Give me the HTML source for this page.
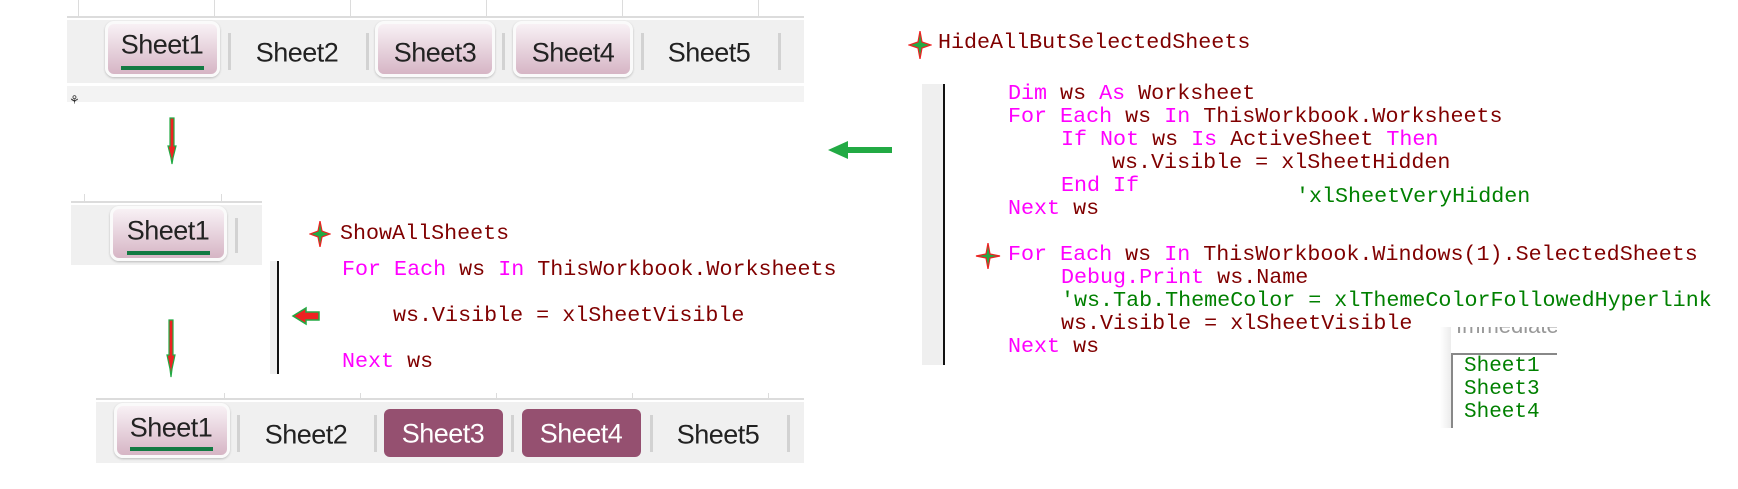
<!DOCTYPE html>
<html><head><meta charset="utf-8"><style>
body{margin:0;width:1738px;height:489px;background:#fff;position:relative;overflow:hidden;font-family:"Liberation Sans",sans-serif}
.a{position:absolute}
.bar{position:absolute;background:#f0f0f0}
.hl{position:absolute;height:2px;background:#dcdcdc}
.vl{position:absolute;width:1px;background:#dcdcdc}
.sep{position:absolute;width:3px;background:#d2d2d2}
.tab{position:absolute;box-sizing:border-box;border-radius:9px;font-size:26px;color:#222;text-align:center}
.sel{background:linear-gradient(#f8f1f5,#d6b5c5);border:3px solid #fafafa;box-shadow:0 1px 2px #bbb}
.pur{background:#955070;color:#fff;border-radius:6px}
.ul{position:absolute;height:4px;background:#137a43}
.t{position:absolute;font-size:27px;color:#222;transform:translate(-50%,-50%);white-space:nowrap;letter-spacing:-0.5px}
.c{position:absolute;font-family:"Liberation Mono",monospace;font-size:21.7px;line-height:24px;white-space:pre;color:#800000}
.k{color:#ff00ff}.g{color:#008000}
</style></head><body>
<!-- top tab bar -->
<div class="vl" style="left:78px;top:0;height:17px"></div>
<div class="vl" style="left:214px;top:0;height:17px"></div>
<div class="vl" style="left:350px;top:0;height:17px"></div>
<div class="vl" style="left:486px;top:0;height:17px"></div>
<div class="vl" style="left:622px;top:0;height:17px"></div>
<div class="vl" style="left:758px;top:0;height:17px"></div>
<div class="hl" style="left:67px;top:16px;width:737px"></div>
<div class="bar" style="left:67px;top:20px;width:737px;height:63px"></div>
<div class="a" style="left:67px;top:86px;width:737px;height:16px;background:#f3f3f3"></div>
<div class="a" style="left:69px;top:93px;font-size:12px;color:#333">&#x2698;</div>
<div class="tab sel" style="left:105px;top:21px;width:115px;height:56px"></div>
<div class="t" style="left:162px;top:45px">Sheet1</div>
<div class="ul" style="left:121px;top:66px;width:83px"></div>
<div class="sep" style="left:228px;top:33px;height:37px"></div>
<div class="t" style="left:297px;top:53px">Sheet2</div>
<div class="sep" style="left:366px;top:33px;height:37px"></div>
<div class="tab sel" style="left:375px;top:21px;width:120px;height:56px"></div>
<div class="t" style="left:435px;top:53px">Sheet3</div>
<div class="sep" style="left:502px;top:33px;height:37px"></div>
<div class="tab sel" style="left:513px;top:21px;width:120px;height:56px"></div>
<div class="t" style="left:573px;top:53px">Sheet4</div>
<div class="sep" style="left:641px;top:33px;height:37px"></div>
<div class="t" style="left:709px;top:53px">Sheet5</div>
<div class="sep" style="left:778px;top:33px;height:37px"></div>

<!-- down arrows -->
<svg class="a" style="left:162px;top:116px" width="20" height="50"><path d="M8 2h4v28h2l-3 12-1 6-1-6-3-12h2z" fill="#ee2222" stroke="#22aa44" stroke-width="1.2"/></svg>
<svg class="a" style="left:161px;top:318px" width="20" height="62"><path d="M8 2h4v35h2l-3 14-1 8-1-8-3-14h2z" fill="#ee2222" stroke="#22aa44" stroke-width="1.2"/></svg>

<!-- middle tab -->
<div class="vl" style="left:84px;top:194px;height:8px"></div>
<div class="vl" style="left:221px;top:194px;height:8px"></div>
<div class="hl" style="left:71px;top:201px;width:191px"></div>
<div class="bar" style="left:71px;top:205px;width:191px;height:60px"></div>
<div class="tab sel" style="left:110px;top:206px;width:117px;height:55px"></div>
<div class="t" style="left:168px;top:231px">Sheet1</div>
<div class="ul" style="left:127px;top:251px;width:83px"></div>
<div class="sep" style="left:235px;top:218px;height:35px"></div>

<!-- left code -->
<svg class="a" style="left:309px;top:221px" width="22" height="26"><path d="M11 0L13 10 21 13 13 16 11 26 9 16 1 13 9 10z" fill="#22aa44" stroke="#ee2222" stroke-width="1.2"/></svg>
<div class="c" style="left:340px;top:222px">ShowAllSheets</div>
<div class="a" style="left:270px;top:261px;width:7px;height:113px;background:#efefef"></div>
<div class="a" style="left:277px;top:261px;width:2px;height:113px;background:#111"></div>
<div class="c" style="left:342px;top:258px"><span class="k">For Each</span> ws <span class="k">In</span> ThisWorkbook.Worksheets</div>
<div class="c" style="left:393px;top:304px">ws.Visible = xlSheetVisible</div>
<div class="c" style="left:342px;top:350px"><span class="k">Next</span> ws</div>
<svg class="a" style="left:290px;top:306px" width="42" height="20"><path d="M3 10L16 2v4h13v8H16v4z" fill="#ee2222" stroke="#22aa44" stroke-width="1.5"/></svg>

<!-- bottom tab bar -->
<div class="vl" style="left:224px;top:393px;height:5px"></div>
<div class="vl" style="left:360px;top:393px;height:5px"></div>
<div class="vl" style="left:496px;top:393px;height:5px"></div>
<div class="vl" style="left:632px;top:393px;height:5px"></div>
<div class="vl" style="left:768px;top:393px;height:5px"></div>
<div class="hl" style="left:96px;top:398px;width:708px"></div>
<div class="bar" style="left:96px;top:402px;width:708px;height:61px"></div>
<div class="tab sel" style="left:114px;top:403px;width:116px;height:55px"></div>
<div class="t" style="left:171px;top:428px">Sheet1</div>
<div class="ul" style="left:130px;top:447px;width:83px"></div>
<div class="sep" style="left:237px;top:415px;height:37px"></div>
<div class="t" style="left:306px;top:435px">Sheet2</div>
<div class="sep" style="left:374px;top:415px;height:37px"></div>
<div class="tab pur" style="left:384px;top:409px;width:119px;height:48px"></div>
<div class="t" style="left:443px;top:434px;color:#fff">Sheet3</div>
<div class="sep" style="left:511px;top:415px;height:37px"></div>
<div class="tab pur" style="left:522px;top:409px;width:119px;height:48px"></div>
<div class="t" style="left:581px;top:434px;color:#fff">Sheet4</div>
<div class="sep" style="left:650px;top:415px;height:37px"></div>
<div class="t" style="left:718px;top:435px">Sheet5</div>
<div class="sep" style="left:787px;top:415px;height:37px"></div>

<!-- green arrow -->
<svg class="a" style="left:826px;top:139px" width="66" height="22"><path d="M2 11L22 2v6h67v6H22v6z" fill="#22aa44"/></svg>

<!-- right code -->
<svg class="a" style="left:908px;top:31px" width="24" height="28"><path d="M12 0L14 11 23 14 14 17 12 28 10 17 1 14 10 11z" fill="#22aa44" stroke="#ee2222" stroke-width="1.2"/></svg>
<div class="c" style="left:938px;top:31px">HideAllButSelectedSheets</div>
<div class="a" style="left:922px;top:84px;width:21px;height:281px;background:#efefef"></div>
<div class="a" style="left:943px;top:84px;width:2px;height:281px;background:#111"></div>
<div class="c" style="left:1008px;top:82px"><span class="k">Dim</span> ws <span class="k">As</span> Worksheet</div>
<div class="c" style="left:1008px;top:105px"><span class="k">For Each</span> ws <span class="k">In</span> ThisWorkbook.Worksheets</div>
<div class="c" style="left:1061px;top:128px"><span class="k">If Not</span> ws <span class="k">Is</span> ActiveSheet <span class="k">Then</span></div>
<div class="c" style="left:1112px;top:151px">ws.Visible = xlSheetHidden</div>
<div class="c" style="left:1061px;top:174px"><span class="k">End If</span></div>
<div class="c g" style="left:1296px;top:185px">'xlSheetVeryHidden</div>
<div class="c" style="left:1008px;top:197px"><span class="k">Next</span> ws</div>
<svg class="a" style="left:975px;top:243px" width="26" height="26"><path d="M13 0L15 11 25 13 15 15 13 26 11 15 1 13 11 11z" fill="#22aa44" stroke="#ee2222" stroke-width="1.2"/></svg>
<div class="c" style="left:1008px;top:243px"><span class="k">For Each</span> ws <span class="k">In</span> ThisWorkbook.Windows(1).SelectedSheets</div>
<div class="c" style="left:1061px;top:266px"><span class="k">Debug.Print</span> ws.Name</div>
<div class="c g" style="left:1061px;top:289px">'ws.Tab.ThemeColor = xlThemeColorFollowedHyperlink</div>
<div class="c" style="left:1061px;top:312px">ws.Visible = xlSheetVisible</div>
<div class="c" style="left:1008px;top:335px"><span class="k">Next</span> ws</div>

<!-- immediate window -->
<div class="a" style="left:1440px;top:327px;width:117px;height:101px;background:#fff;overflow:hidden">
 <div class="a" style="left:0;top:0;width:11px;height:101px;background:linear-gradient(90deg,#fff,#ececec)"></div>
 <div class="a" style="left:16px;top:-14px;font-size:22px;color:#999">Immediate</div>
 <div class="a" style="left:11px;top:26px;width:106px;height:2px;background:#888"></div>
 <div class="a" style="left:11px;top:26px;width:2px;height:75px;background:#888"></div>
 <div class="c g" style="left:24px;top:28px;font-size:21px;line-height:23px">Sheet1
Sheet3
Sheet4</div>
</div>
</body></html>
